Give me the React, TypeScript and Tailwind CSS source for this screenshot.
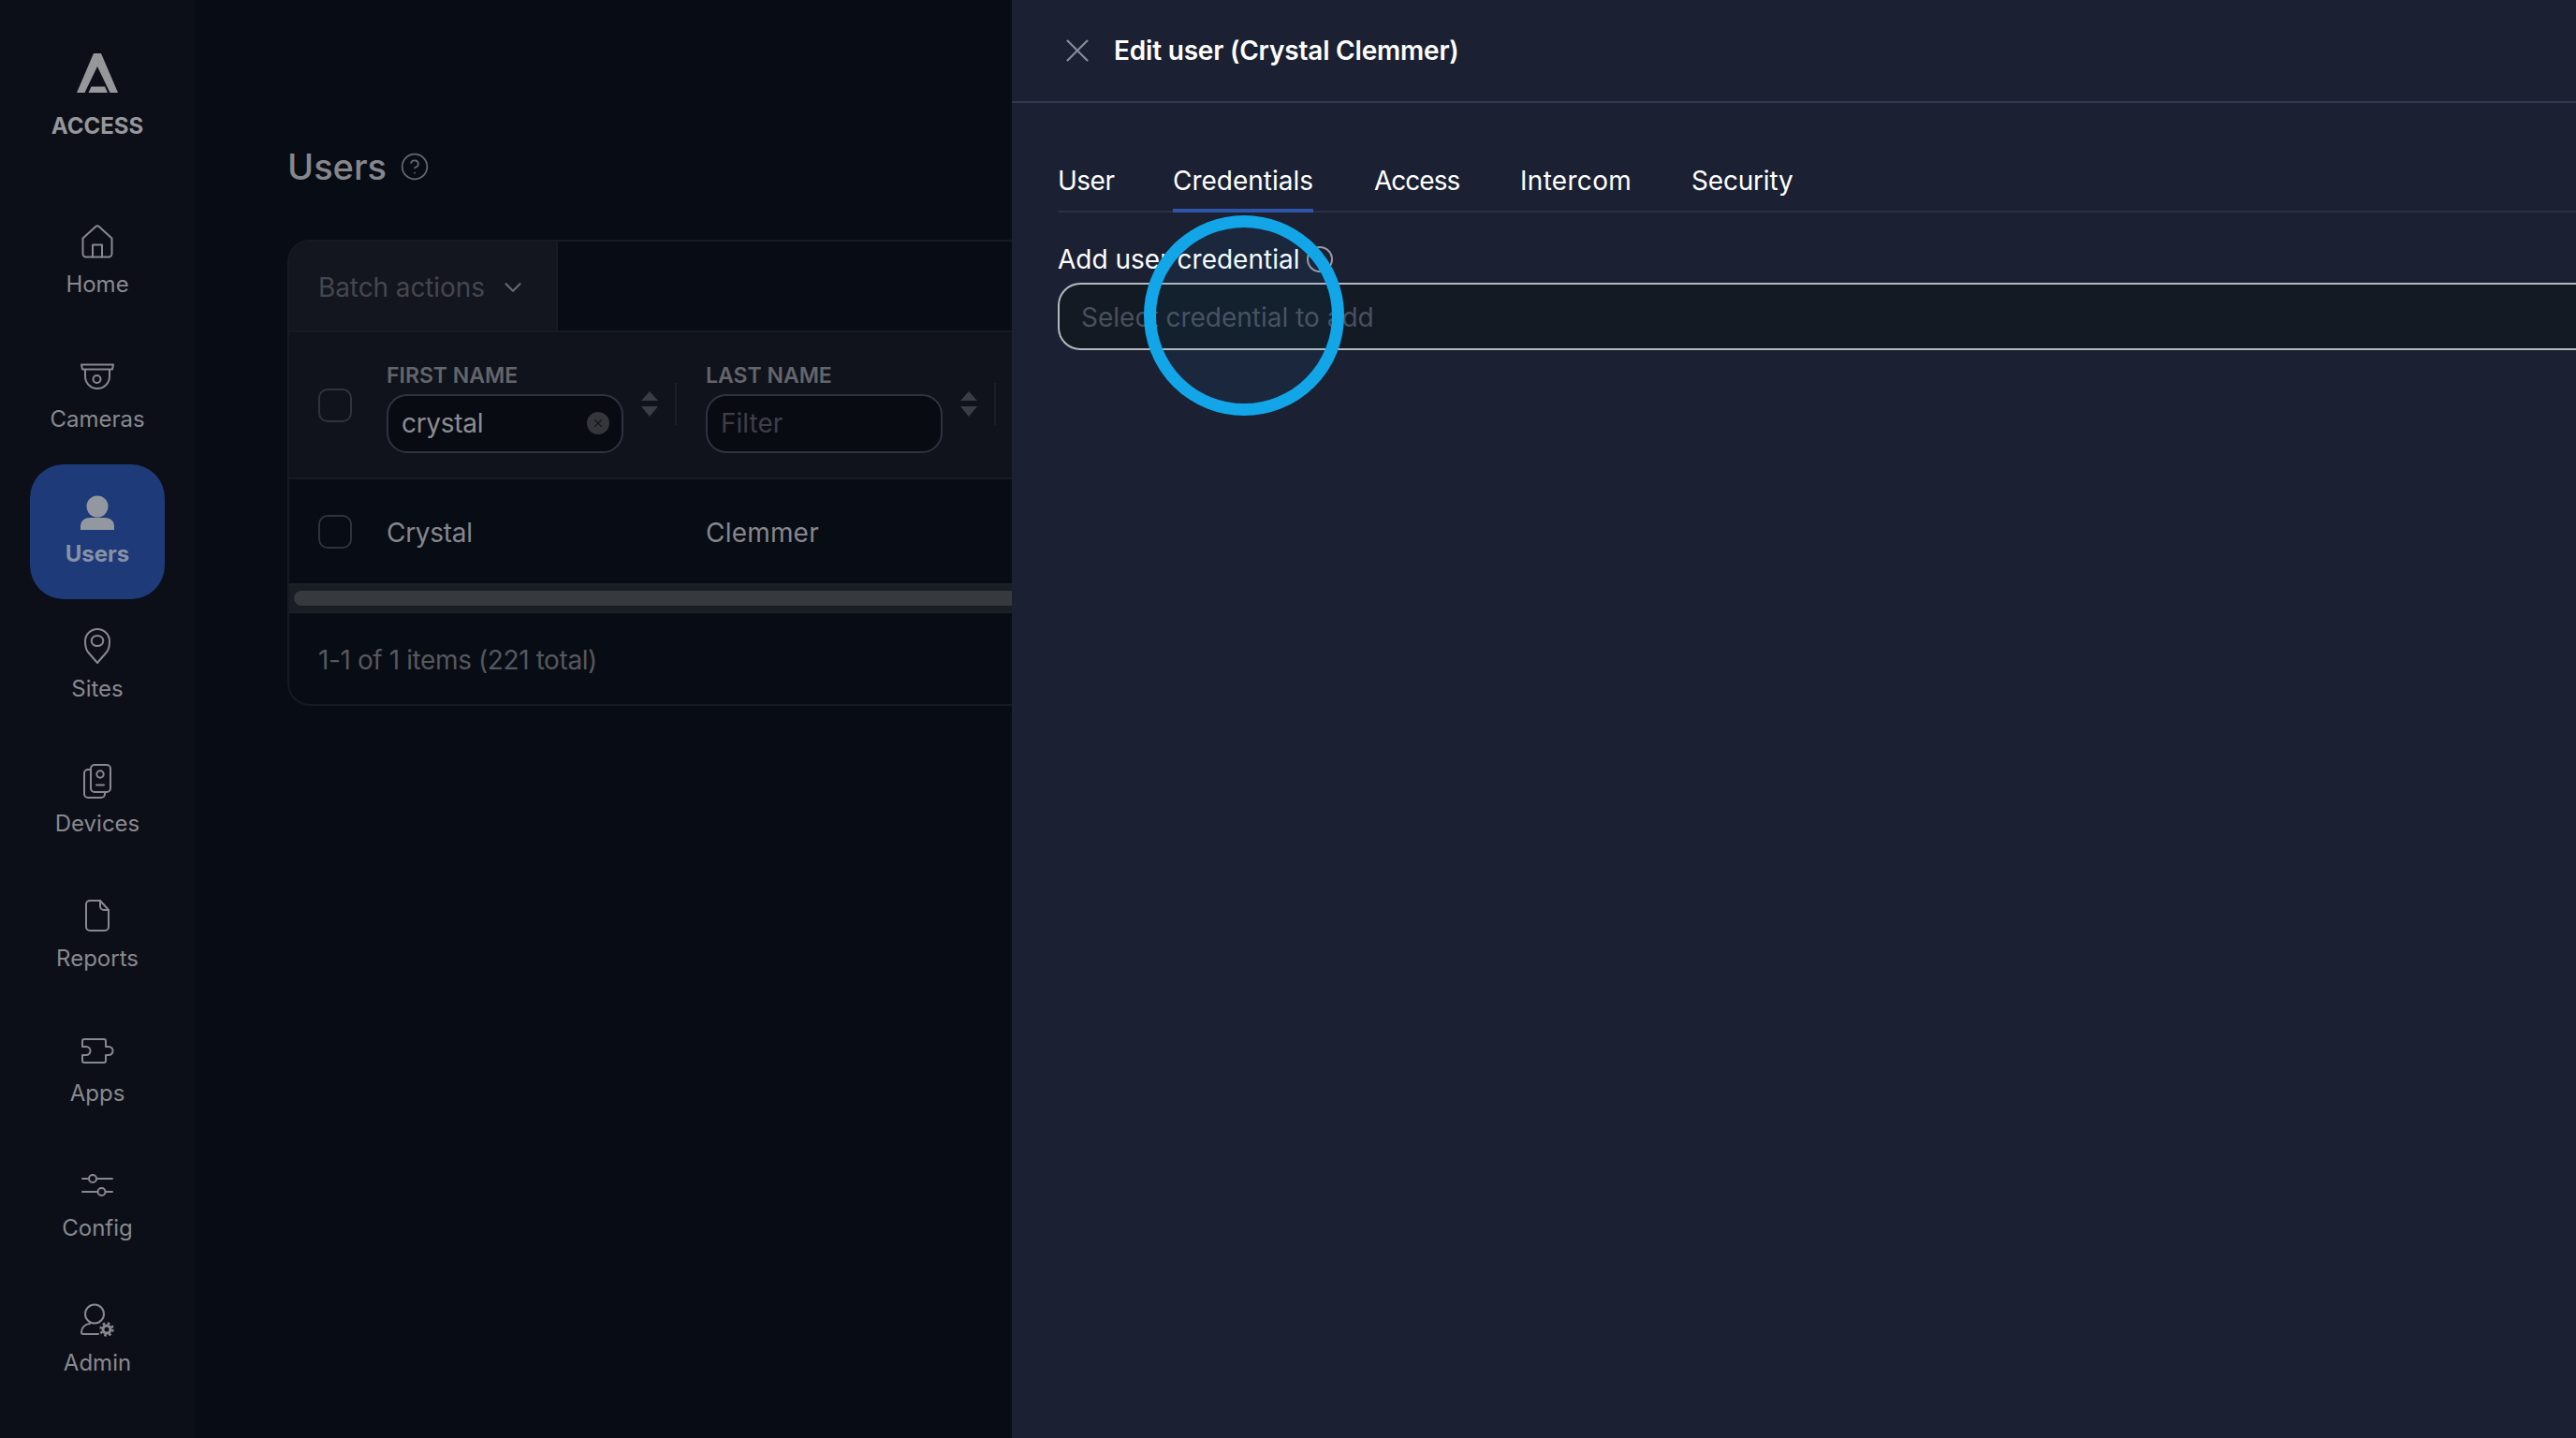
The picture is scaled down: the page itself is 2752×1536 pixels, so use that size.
import { ChevronDown, CircleHelp, X } from 'lucide-react';
import type { ReactNode } from 'react';

const ICON_PROPS = {
  width: 40,
  height: 40,
  viewBox: '0 0 40 40',
  fill: 'none',
  stroke: 'currentColor',
  strokeWidth: 2,
  strokeLinecap: 'round' as const,
  strokeLinejoin: 'round' as const,
};

const navItems: { label: string; active?: boolean; icon: ReactNode }[] = [
  {
    label: 'Home',
    icon: (
      <svg {...ICON_PROPS}>
        <path d="M4.5 16.5 18 4.2a3 3 0 0 1 4 0l13.500 12.300V33a3.500 3.500 0 0 1-3.500 3.500H8A3.500 3.500 0 0 1 4.500 33Z" />
        <path d="M15 36.500V23.500h10v13" />
      </svg>
    ),
  },
  {
    label: 'Cameras',
    icon: (
      <svg {...ICON_PROPS}>
        <path d="M3 7.500h34l-1 5H4Z" />
        <path d="M7 13v7a13 13 0 0 0 26 0v-7" />
        <circle cx="19.500" cy="23" r="4" />
      </svg>
    ),
  },
  {
    label: 'Users',
    active: true,
    icon: (
      <svg width={44} height={40} viewBox="0 0 44 40" fill="currentColor">
        <circle cx="22" cy="13" r="11.500" />
        <path d="M4 38v-4c0-6 5-9 10-9h16c5 0 10 3 10 9v4Z" />
      </svg>
    ),
  },
  {
    label: 'Sites',
    icon: (
      <svg {...ICON_PROPS}>
        <path d="M20 38 10 26.500C8 24 7 20 7 15a13 13 0 0 1 26 0c0 5-1 9-3 11.500Z" />
        <ellipse cx="20" cy="14.500" rx="6.300" ry="5.500" />
      </svg>
    ),
  },
  {
    label: 'Devices',
    icon: (
      <svg {...ICON_PROPS}>
        <rect x="13" y="3" width="21" height="29" rx="4" />
        <path d="M13 8h-3a4 4 0 0 0-4 4v22a4 4 0 0 0 4 4h14a4 4 0 0 0 4-4v-2" />
        <circle cx="23" cy="13" r="3.700" />
        <path d="M19 24.500h8" />
      </svg>
    ),
  },
  {
    label: 'Reports',
    icon: (
      <svg {...ICON_PROPS}>
        <path d="M12 4h11l9 10v18a4 4 0 0 1-4 4H12a4 4 0 0 1-4-4V8a4 4 0 0 1 4-4Z" />
        <path d="M23 4v6a4 4 0 0 0 4 4h5" />
      </svg>
    ),
  },
  {
    label: 'Apps',
    icon: (
      <svg {...ICON_PROPS}>
        <path d="M6 8h21a2 2 0 0 1 2 2v6h3a4.500 4.500 0 0 1 0 9h-3v6a2 2 0 0 1-2 2H6a2 2 0 0 1-2-2v-6h4a4.500 4.500 0 0 0 0-9H4v-6a2 2 0 0 1 2-2Z" />
      </svg>
    ),
  },
  {
    label: 'Config',
    icon: (
      <svg {...ICON_PROPS}>
        <path d="M4 13h7M19 13h17M4 27h16M29 27h7" />
        <circle cx="15" cy="13" r="4" />
        <circle cx="24.500" cy="27" r="4" />
      </svg>
    ),
  },
  {
    label: 'Admin',
    icon: (
      <svg {...ICON_PROPS}>
        <circle cx="17" cy="13.500" r="10" />
        <path d="M21 35H5a2 2 0 0 1-2-2c0-5 4-9 9-9" />
        <circle cx="30" cy="30" r="4" strokeWidth={3} />
        <circle cx="30" cy="30" r="6.500" strokeWidth={2.500} strokeDasharray="2.500 2.600" strokeLinecap="butt" />
      </svg>
    ),
  },
];

const tabs = [
  { label: 'User', className: 'w-[58px] tracking-[-0.5px]' },
  { label: 'Credentials', className: 'w-[150px]' },
  { label: 'Access', className: 'w-[91px] tracking-[-1px]' },
  { label: 'Intercom', className: 'w-[118px] tracking-[0.3px]' },
  { label: 'Security', className: 'w-[107px] tracking-[-0.2px]' },
];

function SortArrows() {
  return (
    <svg width={18} height={27} viewBox="0 0 18 27" fill="#3a3c46" className="shrink-0">
      <path d="M9 0 18 10H0Z" />
      <path d="M0 16h18L9 27Z" />
    </svg>
  );
}

function FilterColumn({ label, value }: { label: string; value?: string }) {
  return (
    <div className="flex w-[341px] shrink-0 items-center">
      <div className="w-[253px] shrink-0">
        <div className="text-[23px] leading-[30px] font-semibold text-[#63656b]">{label}</div>
        <div className="relative mt-[5px] flex h-[63px] items-center rounded-[22px] border-2 border-[#30333d] bg-[#090b12] pl-[14px] text-[28px]">
          {value ? (
            <span className="tracking-[-0.3px] text-[#8b8d92]">{value}</span>
          ) : (
            <span className="text-[#3d3f47]">Filter</span>
          )}
          {value && (
            <span className="absolute right-[13px] top-[17px] flex h-6 w-6 items-center justify-center rounded-full bg-[#34363c] text-[#14161b]">
              <X size={14} strokeWidth={2} />
            </span>
          )}
        </div>
      </div>
      <div className="ml-[19px] mt-[-6px]">
        <SortArrows />
      </div>
      <div className="ml-[18px] mt-[-6px] h-[45px] w-[2px] bg-[#1c1f27]" />
    </div>
  );
}

export default function App() {
  return (
    <div className="relative flex h-[1536px] w-[2752px] overflow-hidden bg-[#080c14] font-[Inter,sans-serif]">
      {/* Sidebar */}
      <aside className="flex w-[208px] shrink-0 flex-col items-center bg-[#0c0f18]">
        <svg width={44} height={42} viewBox="0 0 44 42" fill="#96979a" className="mt-[57px]">
          <path d="M18 0h8l18 42h-8.500L22 14 8.500 42H0Z" />
          <path d="M15.500 35.500h14.500L33 42H12.500Z" />
        </svg>
        <div className="mt-[20px] text-[24px] leading-[32px] font-bold text-[#96979a]">ACCESS</div>
        <nav className="mt-[57px] flex w-full flex-col items-center">
          {navItems.map((item) => (
            <div
              key={item.label}
              className={
                item.active
                  ? 'flex h-[144px] w-[144px] flex-col items-center rounded-[36px] bg-[#1e3a78] pt-[32px] text-[#93979f]'
                  : 'flex h-[144px] w-[144px] flex-col items-center pt-[30px] text-[#88898e]'
              }
            >
              {item.icon}
              <span
                className={
                  item.active
                    ? 'mt-[10px] text-[24px] leading-[28px] font-bold text-[#8891a6]'
                    : 'mt-[12px] text-[24px] leading-[28px]'
                }
              >
                {item.label}
              </span>
            </div>
          ))}
        </nav>
      </aside>

      {/* Users table, dimmed behind the panel */}
      <main className="min-w-0 flex-1 pl-[99px]">
        <div className="mt-[152px] flex h-[52px] items-center">
          <h1 className="text-[38px] font-medium text-[#85878c]">Users</h1>
          <CircleHelp size={32} strokeWidth={1.3} className="ml-[14px] text-[#66686e]" />
        </div>
        <div className="mt-[52px] w-[2400px] overflow-hidden rounded-[24px] border-2 border-[#161a23]">
          <div className="flex h-[97px] border-b-2 border-[#161a23]">
            <div className="flex w-[287px] items-center border-r-2 border-[#161a23] bg-[#13161e] pl-[31px] pt-[3px]">
              <span className="text-[28px] tracking-[-0.1px] text-[#44474f]">Batch actions</span>
              <ChevronDown size={30} strokeWidth={1.8} className="ml-[15px] text-[#66686e]" />
            </div>
          </div>
          <div className="flex h-[157px] items-center border-b-2 border-[#161a23] bg-[#10131b] pt-[4px]">
            <div className="mt-[-4px] w-[104px] shrink-0 pl-[31px]">
              <div className="h-[36px] w-[36px] rounded-[10px] border-2 border-[#30333d]" />
            </div>
            <FilterColumn label="FIRST NAME" value="crystal" />
            <FilterColumn label="LAST NAME" />
          </div>
          <div className="flex h-[113px] items-center border-b-2 border-[#1c2027] text-[28px] text-[#85878c]">
            <div className="w-[104px] shrink-0 pl-[31px]">
              <div className="h-[36px] w-[36px] rounded-[10px] border-2 border-[#30333d]" />
            </div>
            <div className="w-[341px] shrink-0 pt-[2px] tracking-[-0.3px]">Crystal</div>
            <div className="pt-[2px] tracking-[0.2px]">Clemmer</div>
          </div>
          <div className="flex h-[30px] items-center border-b-2 border-[#1c2027] bg-[#191d24] pl-[5px]">
            <div className="h-[16px] w-full rounded-full bg-[#36393e]" />
          </div>
          <div className="flex h-[97px] items-center pl-[31px] pt-[2px] text-[28px] tracking-[-0.4px] text-[#55585e]">
            1-1 of 1 items (221 total)
          </div>
        </div>
      </main>

      {/* Edit user panel */}
      <section className="absolute inset-y-0 right-0 w-[1671px] bg-[#1b2133]">
        <header className="flex h-[110px] items-center border-b-2 border-[#333a4d] pl-[49px]">
          <X size={42} strokeWidth={1.2} className="text-[#8a8d99]" />
          <h2 className="ml-[18px] text-[28px] font-semibold tracking-[-0.2px] text-white">Edit user (Crystal Clemmer)</h2>
        </header>
        <div className="pl-[49px]">
          <div className="mt-[62px] flex h-[55px] gap-[65px] border-b-2 border-[#2a3040] text-[28px] text-white">
            {tabs.map((tab) => (
              <div
                key={tab.label}
                className={
                  tab.label === 'Credentials'
                    ? `h-[55px] border-b-4 border-[#2f55a8] leading-[42px] ${tab.className}`
                    : `h-[53px] leading-[42px] ${tab.className}`
                }
              >
                {tab.label}
              </div>
            ))}
          </div>
          <div className="mt-[32px] flex h-[36px] items-center text-[28px] text-white">
            Add user credential
            <span className="ml-[8px] block h-[28px] w-[28px] rounded-full border-2 border-[#9a9ca3]" />
          </div>
          <div className="mt-[7px] flex h-[72px] items-center rounded-l-[24px] border-y-2 border-l-2 border-[#b4b8bd] bg-[#131a24] pl-[23px] pt-[2px] text-[28px] text-[#4a505c]">
            Select credential to add
          </div>
        </div>
      </section>

      {/* Click highlight */}
      <div className="absolute left-[1222px] top-[230px] h-[214px] w-[214px] rounded-full border-[13px] border-[#12a6e8] bg-[#0ea5e9]/[0.05]" />
    </div>
  );
}
